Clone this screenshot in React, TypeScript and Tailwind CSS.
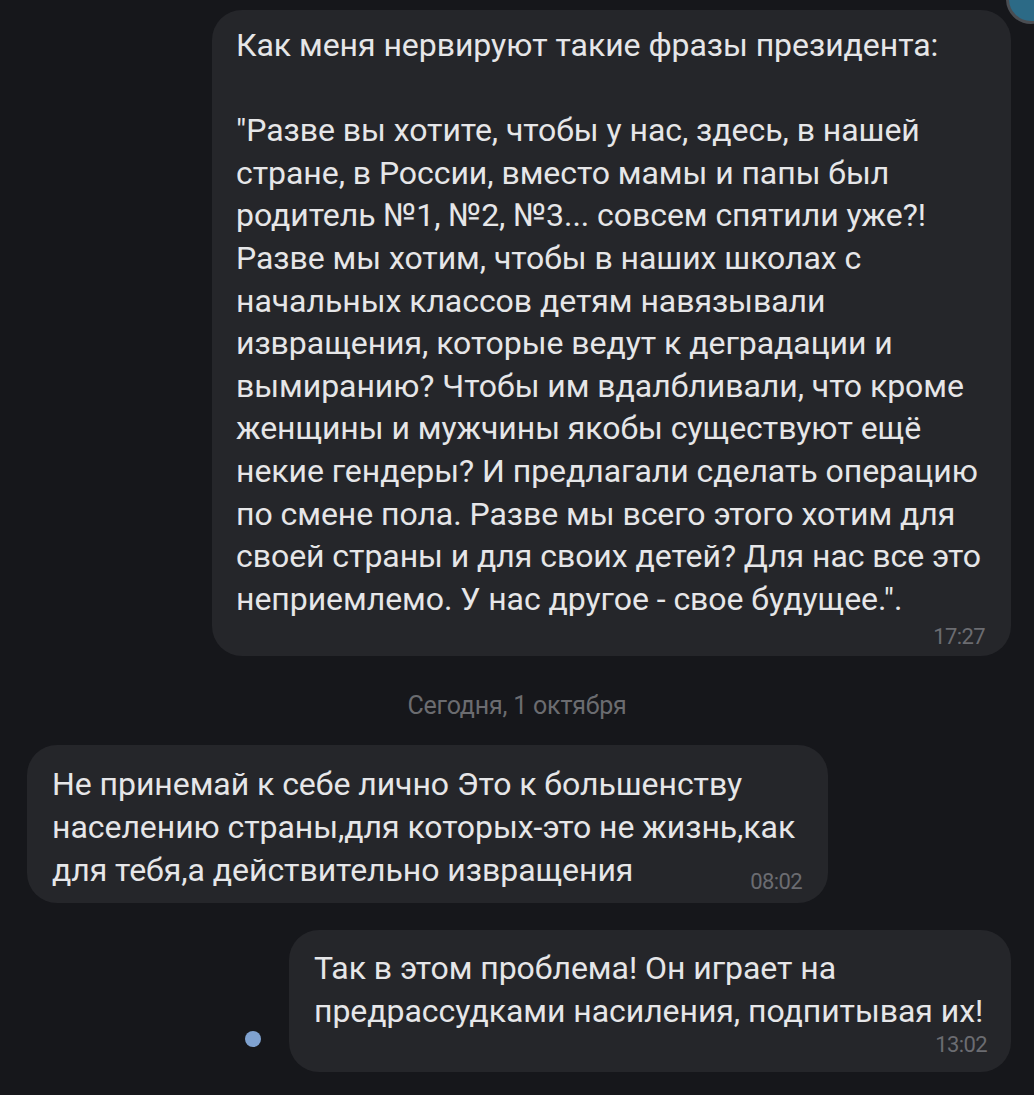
const first = [
  'Как меня нервируют такие фразы президента:',
  '',
  '"Разве вы хотите, чтобы у нас, здесь, в нашей',
  'стране, в России, вместо мамы и папы был',
  'родитель №1, №2, №3... совсем спятили уже?!',
  'Разве мы хотим, чтобы в наших школах с',
  'начальных классов детям навязывали',
  'извращения, которые ведут к деградации и',
  'вымиранию? Чтобы им вдалбливали, что кроме',
  'женщины и мужчины якобы существуют ещё',
  'некие гендеры? И предлагали сделать операцию',
  'по смене пола. Разве мы всего этого хотим для',
  'своей страны и для своих детей? Для нас все это',
  'неприемлемо. У нас другое - свое будущее.".',
];

const second = [
  'Не принемай к себе лично Это к большенству',
  'населению страны,для которых-это не жизнь,как',
];

const third = ['Так в этом проблема! Он играет на', 'предрассудками насиления, подпитывая их!'];

function Lines({ lines }: { lines: string[] }) {
  return (
    <>
      {lines.map((l, i) => (
        <div key={i} className="whitespace-nowrap h-[42.6px]">
          {l || '\u00a0'}
        </div>
      ))}
    </>
  );
}

export default function App() {
  return (
    <div
      className="relative w-[1034px] h-[1095px] overflow-hidden bg-[#16171b] text-[#e6e6e8]"
      style={{ fontFamily: 'Roboto, "Noto Sans", sans-serif' }}
    >
      {/* avatar peeking at the corner */}
      <div className="absolute -top-[26px] -right-[22px] w-[50px] h-[50px] rounded-full border-[3px] border-[#4a4d52] bg-[#2c6a86]" />

      <div className="flex flex-col pt-[10px]">
        <div className="flex justify-end pr-[23px]">
          <div className="w-[799px] rounded-[30px] bg-[#25262a] pl-[24px] pr-[26px] pt-[14px] pb-[6px] text-[32px] leading-[42.6px] tracking-[-0.05px]">
            <Lines lines={first} />
            <div className="flex justify-end pt-[4px] text-[22px] leading-[26px] tracking-[-0.6px] text-[#6b6c71]">17:27</div>
          </div>
        </div>

        <div className="flex justify-center pt-[35px] pb-[24px] text-[25px] leading-[30px] tracking-[-0.2px] text-[#6b6c70]">Сегодня, 1 октября</div>

        <div className="flex pl-[27px]">
          <div className="w-[801px] rounded-[30px] bg-[#25262a] pl-[25px] pr-[26px] pt-[18px] pb-[12px] text-[32px] leading-[42.6px] tracking-[-0.05px]">
            <Lines lines={second} />
            <div className="flex items-end justify-between h-[42.6px]">
              <span className="whitespace-nowrap">для тебя,а действительно извращения</span>
              <span className="text-[22px] leading-[26px] tracking-[-0.6px] text-[#6b6c71] mb-[-4px]">08:02</span>
            </div>
          </div>
        </div>

        <div className="flex justify-end items-center pr-[23px] pt-[27px]">
          <div className="shrink-0 mr-[28px] mt-[76px] w-[16px] h-[16px] rounded-full bg-[#7fa2d0]" />
          <div className="w-[722px] rounded-[30px] bg-[#25262a] pl-[25px] pr-[24px] pt-[17px] pb-[14px] text-[32px] leading-[42.6px] tracking-[-0.05px]">
            <Lines lines={third} />
            <div className="flex justify-end text-[22px] leading-[26px] tracking-[-0.6px] text-[#6b6c71]">13:02</div>
          </div>
        </div>
      </div>
    </div>
  );
}
